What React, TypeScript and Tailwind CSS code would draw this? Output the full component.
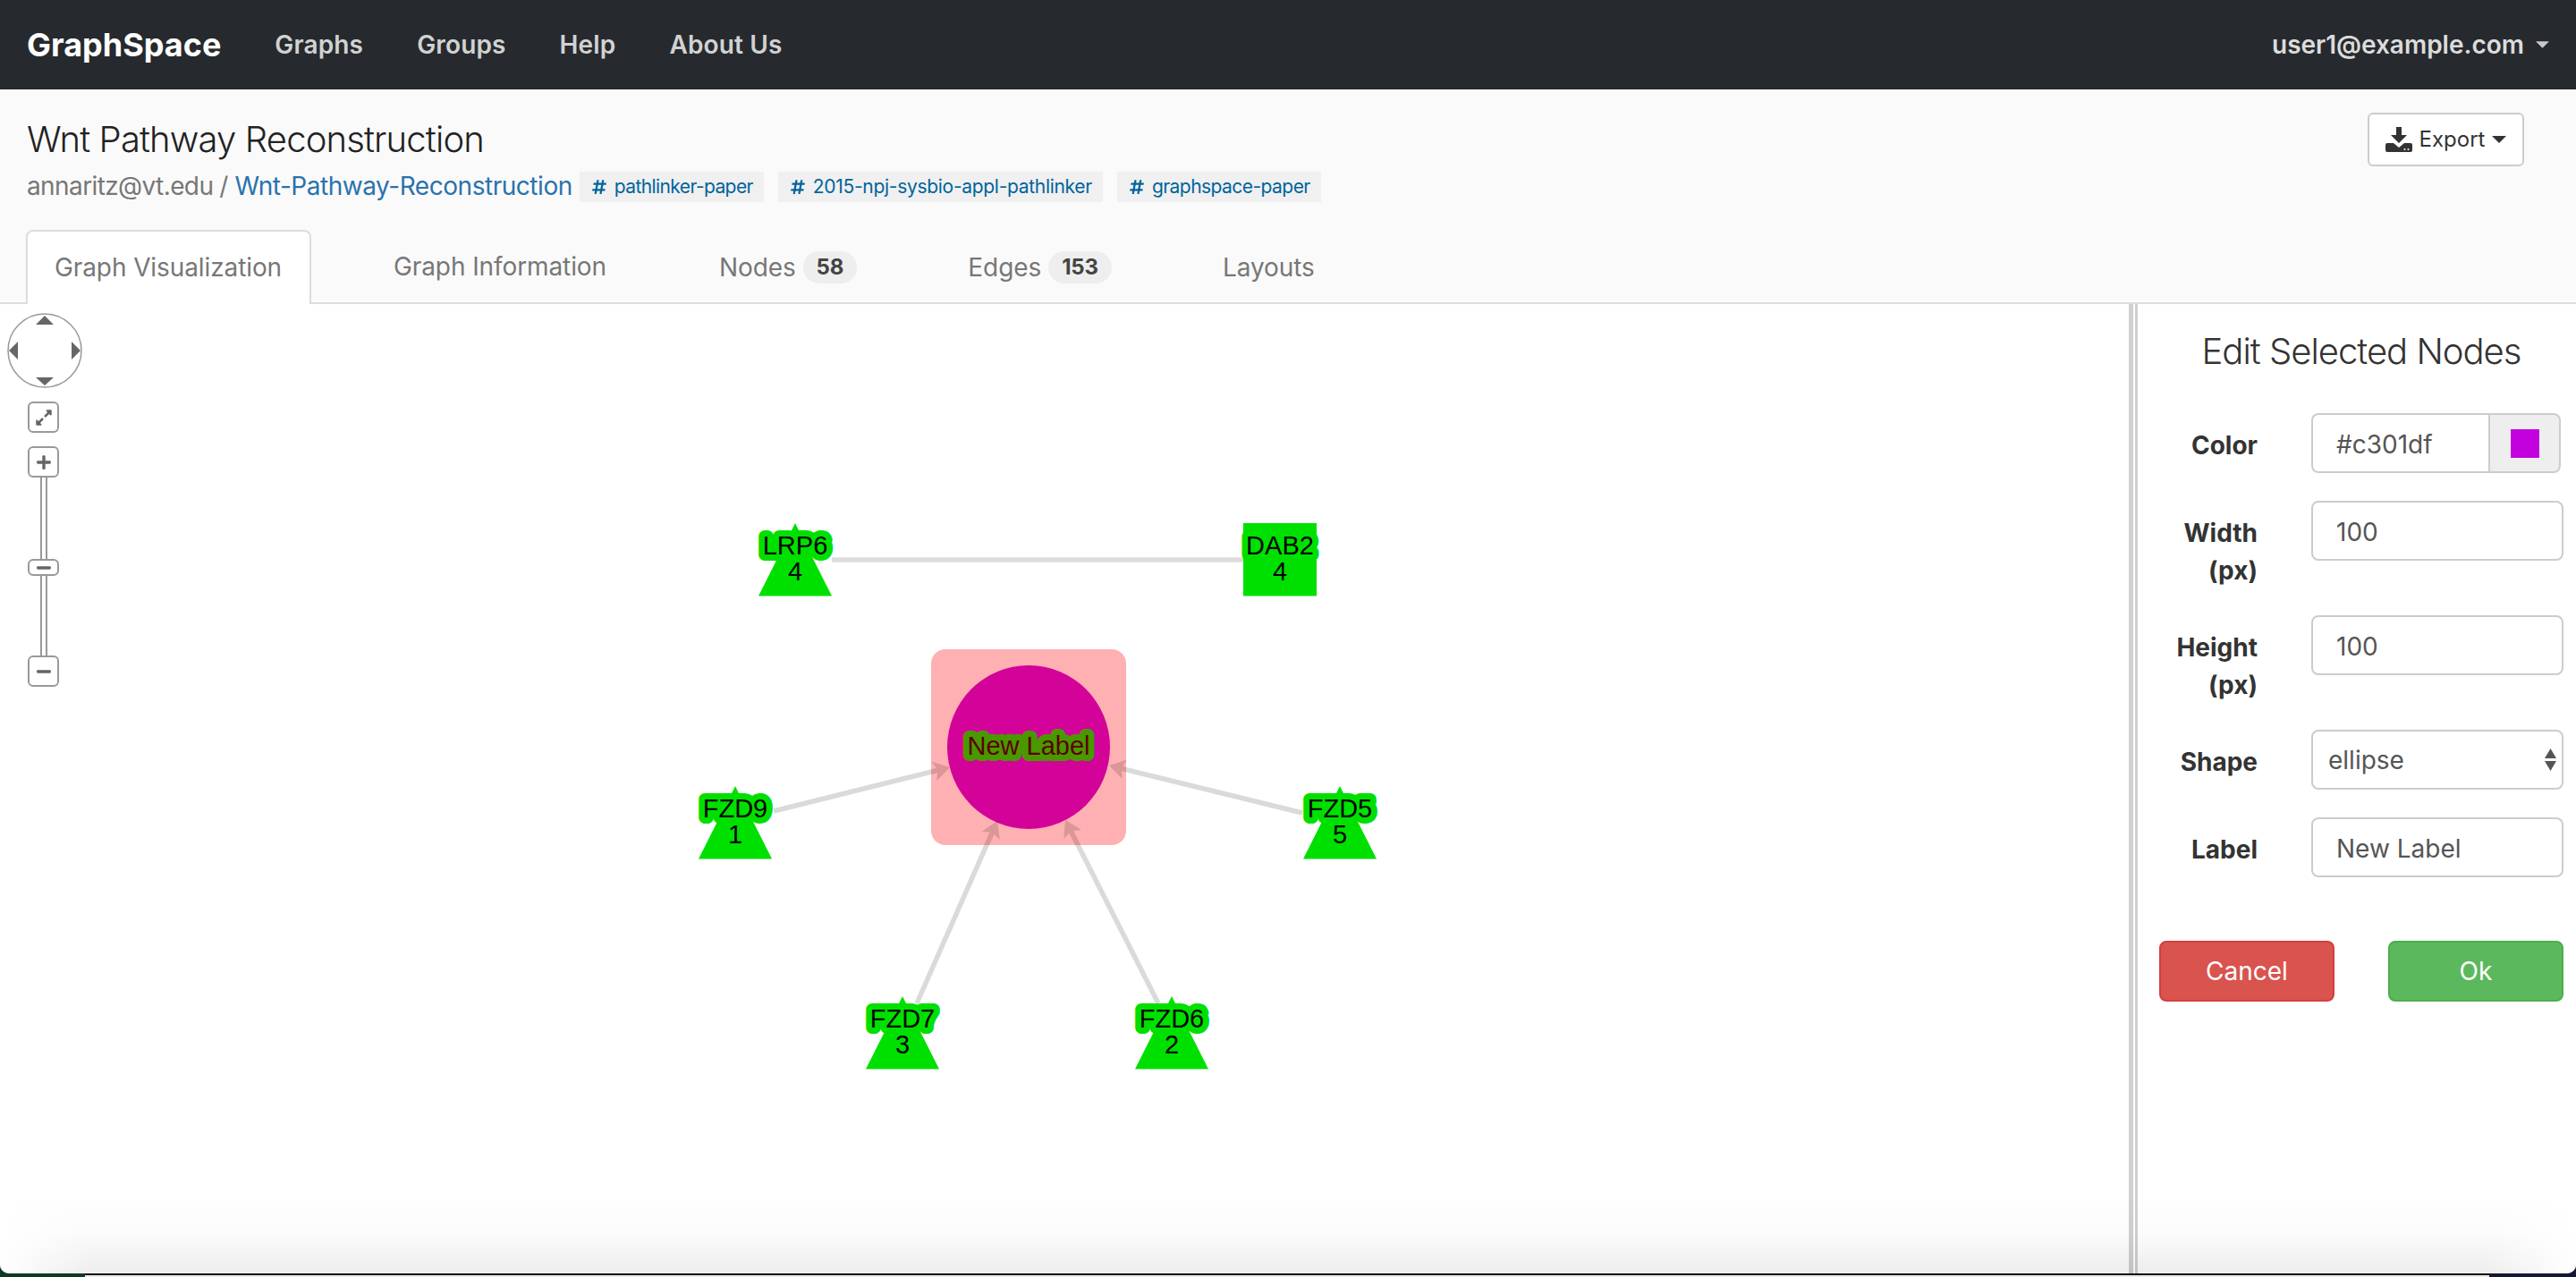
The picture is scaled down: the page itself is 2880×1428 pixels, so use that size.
import React from 'react';
import { FaExpandAlt, FaHashtag, FaMinus, FaPlus } from 'react-icons/fa';

const sans = 'font-["Inter","Liberation_Sans",sans-serif]';

function Caret({ className }: { className: string }) {
  return (
    <svg viewBox="0 0 16 8" className={className} fill="currentColor">
      <path d="M0 0h16L8 8z" />
    </svg>
  );
}

function DownloadIcon() {
  return (
    <svg viewBox="0 0 30 28" className="w-[30px] h-[28px] text-[#333]" fill="currentColor">
      <path d="M12 0h6v9h6l-9 9-9-9h6z" />
      <path d="M2 18h7l6 5 6-5h7a2 2 0 0 1 2 2v6a2 2 0 0 1-2 2H2a2 2 0 0 1-2-2v-6a2 2 0 0 1 2-2z" />
      <circle cx="21.5" cy="25" r="1" fill="#fff" />
      <circle cx="25.5" cy="25" r="1" fill="#fff" />
    </svg>
  );
}

function Tag({ label, tracking }: { label: string; tracking: string }) {
  return (
    <span className={`h-[34px] flex items-center pl-[13px] pr-[12px] gap-[8px] bg-[#f0f0f0] text-[#00649c] text-[21px] ${tracking}`}>
      <FaHashtag className="w-[18px] h-[18px]" />
      {label}
    </span>
  );
}

function Badge({ value }: { value: string }) {
  return (
    <span className="h-[36px] px-[15px] flex items-center rounded-full bg-[#eeeeee] text-[#444] text-[24px] font-bold">
      {value}
    </span>
  );
}

function GraphNode({ x, y, name, rank, square }: { x: number; y: number; name: string; rank: string; square?: boolean }) {
  return (
    <g>
      {square ? (
        <rect x={x - 41} y={y} width="82" height="81.5" fill="#00e000" />
      ) : (
        <polygon points={`${x},${y} ${x + 41},${y + 81.5} ${x - 41},${y + 81.5}`} fill="#00e000" />
      )}
      <text
        x={x}
        y={y + 35}
        textAnchor="middle"
        fontSize="29"
        fill="#000"
        stroke="#00e000"
        strokeWidth="14"
        strokeLinejoin="round"
        paintOrder="stroke"
      >
        {name}
      </text>
      <text x={x} y={y + 64} textAnchor="middle" fontSize="29" fill="#000">
        {rank}
      </text>
    </g>
  );
}

function Edge({ x1, y1, x2, y2 }: { x1: number; y1: number; x2: number; y2: number }) {
  const angle = (Math.atan2(y2 - y1, x2 - x1) * 180) / Math.PI;
  return (
    <g opacity="0.14">
      <line x1={x1} y1={y1} x2={x2 - 10 * Math.cos((angle * Math.PI) / 180)} y2={y2 - 10 * Math.sin((angle * Math.PI) / 180)} stroke="#000" strokeWidth="5.5" />
      <polygon points="0,0 -18,-11 -14,0 -18,11" fill="#000" transform={`translate(${x2} ${y2}) rotate(${angle})`} />
    </g>
  );
}

function GraphCanvas() {
  return (
    <svg viewBox="0 340 2380 1084" className="w-full h-full block font-['Liberation_Sans',sans-serif]">
      <rect x="1041" y="726" width="218" height="219" rx="16" fill="#ffb0b2" />
      <ellipse cx="1150" cy="835.5" rx="91" ry="91.5" fill="#d30399" />
      <line x1="930" y1="626" x2="1390" y2="626" stroke="#dcdcdc" strokeWidth="5.5" />
      <Edge x1={865} y1={907} x2={1062} y2={858} />
      <Edge x1={1456} y1={909} x2={1240} y2={856} />
      <Edge x1={1025} y1={1122} x2={1115} y2={918} />
      <Edge x1={1295} y1={1122} x2={1191} y2={917} />
      <GraphNode x={889} y={585} name="LRP6" rank="4" />
      <GraphNode x={1431} y={585} name="DAB2" rank="4" square />
      <GraphNode x={822} y={879} name="FZD9" rank="1" />
      <GraphNode x={1498} y={879} name="FZD5" rank="5" />
      <GraphNode x={1009} y={1114} name="FZD7" rank="3" />
      <GraphNode x={1310} y={1114} name="FZD6" rank="2" />
      <text
        x="1150"
        y="844"
        textAnchor="middle"
        fontSize="29"
        fill="#5a0000"
        stroke="#4a9800"
        strokeWidth="14"
        strokeLinejoin="round"
        paintOrder="stroke"
      >
        New Label
      </text>
    </svg>
  );
}

function PanZoom() {
  const btn = 'w-[35px] flex items-center justify-center bg-white border-2 border-[#999] rounded-[6px] text-[#666]';
  return (
    <div className="absolute left-[8px] top-[10px] flex flex-col">
      <svg viewBox="0 0 84 84" className="w-[84px] h-[84px]">
        <circle cx="42" cy="42" r="41" fill="#fff" stroke="#999" strokeWidth="1.5" />
        <path d="M42 3l10 10H32zM42 81L32 72h20zM2 42l10-10v20zM82 42L72 32v20z" fill="#666" />
      </svg>
      <div className="ml-[23px] mt-[15px] flex flex-col items-center w-[35px]">
        <div className={`${btn} h-[35px]`}>
          <FaExpandAlt className="w-[20px] h-[20px]" />
        </div>
        <div className={`${btn} h-[35px] mt-[15px]`}>
          <FaPlus className="w-[18px] h-[18px]" />
        </div>
        <div className="w-[8px] h-[91px] border-x-2 border-[#999] bg-white" />
        <div className={`${btn} h-[19px]`}>
          <FaMinus className="w-[18px] h-[18px]" />
        </div>
        <div className="w-[8px] h-[89px] border-x-2 border-[#999] bg-white" />
        <div className={`${btn} h-[35px]`}>
          <FaMinus className="w-[18px] h-[18px]" />
        </div>
      </div>
    </div>
  );
}

function FieldRow({ label, tall, children }: { label: React.ReactNode; tall?: boolean; children: React.ReactNode }) {
  return (
    <div className={`flex ${tall ? 'h-[97px]' : 'h-[67px]'}`}>
      <label className="w-[110px] pt-[15px] text-right font-bold text-[28px] leading-[42px] text-[#333]">{label}</label>
      <div className="ml-[60px] w-[282px]">{children}</div>
    </div>
  );
}

const inputClass =
  'w-full h-[67px] px-[26px] pt-[2px] bg-white border-2 border-[#ccc] rounded-[8px] text-[28px] text-[#555] outline-none';

export default function App() {
  return (
    <div className={`w-[2880px] h-[1428px] flex flex-col overflow-hidden bg-[linear-gradient(90deg,#0c3a22_50%,#141a33_50%)] ${sans}`}>
      <div className="h-[1424px] shrink-0 relative overflow-hidden rounded-b-[10px] bg-white flex flex-col">
        {/* Navbar */}
        <nav className="h-[100px] shrink-0 bg-[#262a2e] flex items-center pl-[30px] pr-[30px]">
          <span className="text-white font-bold text-[36px]">GraphSpace</span>
          <div className="ml-[60px] flex items-center gap-[60px] text-[28px] font-semibold text-[#d2d2d2] tracking-[0.15px]">
            <a>Graphs</a>
            <a>Groups</a>
            <a>Help</a>
            <a>About Us</a>
          </div>
          <div className="ml-auto flex items-center gap-[13px] text-[28px] font-semibold text-[#dcdcdc]">
            user1@example.com
            <Caret className="w-[15px] h-[8px] text-[#c8c8c8]" />
          </div>
        </nav>

        {/* Graph title, tags and tabs */}
        <header className="h-[240px] shrink-0 bg-[#fafafa] border-b-2 border-[#ddd] flex flex-col justify-between">
          <div className="flex items-start justify-between pl-[30px] pr-[58px]">
            <div className="pt-[32px]">
              <h1 className="font-light text-[40px] leading-[48px] text-[#222] tracking-[-0.85px]">Wnt Pathway Reconstruction</h1>
              <div className="mt-[12px] flex items-center h-[34px]">
                <span className="text-[28px] text-[#777] tracking-[-0.6px] pb-[3px]">annaritz@vt.edu</span>
                <span className="text-[28px] text-[#777] ml-[7px] pb-[3px]">/</span>
                <a className="text-[28px] text-[#2a72ad] ml-[7px] tracking-[-0.46px] pb-[3px]">Wnt-Pathway-Reconstruction</a>
                <div className="flex gap-[16px] ml-[8px]">
                  <Tag label="pathlinker-paper" tracking="tracking-[-0.6px]" />
                  <Tag label="2015-npj-sysbio-appl-pathlinker" tracking="tracking-[-0.3px]" />
                  <Tag label="graphspace-paper" tracking="tracking-[-0.55px]" />
                </div>
              </div>
            </div>
            <button className="mt-[26px] h-[60px] w-[175px] flex items-center justify-center gap-[8px] bg-white border-2 border-[#ccc] rounded-[6px] text-[24px] text-[#333]">
              <DownloadIcon />
              Export
              <Caret className="w-[16px] h-[8px]" />
            </button>
          </div>
          <div className="flex pl-[29px] gap-[62px] text-[28px] text-[#777] tracking-[-0.1px] -mb-[2px]">
            <a className="h-[83px] pl-[30px] pr-[31px] pb-[2px] flex items-center bg-white border-2 border-b-0 border-[#ddd] rounded-t-[8px]">
              Graph Visualization
            </a>
            <a className="h-[83px] px-[31px] pb-[2px] ml-[-1px] mr-[2px] flex items-center">Graph Information</a>
            <a className="h-[83px] px-[31px] flex items-center gap-[8px]">
              Nodes <Badge value="58" />
            </a>
            <a className="h-[83px] px-[31px] flex items-center gap-[8px]">
              Edges <Badge value="153" />
            </a>
            <a className="h-[83px] px-[31px] flex items-center">Layouts</a>
          </div>
        </header>

        <main className="flex-1 flex min-h-0">
          <div className="w-[2380px] relative">
            <GraphCanvas />
            <PanZoom />
          </div>

          {/* Splitter */}
          <div className="w-[10px] flex justify-between bg-white">
            <div className="w-[5px] bg-[#d0d0d0]" />
            <div className="w-[3px] bg-[#d0d0d0]" />
          </div>

          {/* Edit panel */}
          <aside className="flex-1 pt-[29px] pl-[24px] pr-[14px] text-[#333]">
            <h2 className="font-light text-[40px] leading-[48px] text-center tracking-[-1px]">Edit Selected Nodes</h2>
            <form className="mt-[45px] flex flex-col gap-[31px]">
              <FieldRow label="Color">
                <div className="flex w-[279px] h-[67px]">
                  <input
                    readOnly
                    defaultValue="#c301df"
                    className="w-[198px] h-full px-[26px] pt-[2px] bg-white border-2 border-r-0 border-[#ccc] rounded-l-[8px] text-[28px] text-[#555] outline-none"
                  />
                  <span className="flex-1 flex items-center justify-center bg-[#eeeeee] border-2 border-[#ccc] rounded-r-[8px]">
                    <span className="w-[32px] h-[32px] bg-[#c301df]" />
                  </span>
                </div>
              </FieldRow>
              <FieldRow
                tall
                label={
                  <>
                    Width
                    <br />
                    (px)
                  </>
                }
              >
                <input readOnly defaultValue="100" className={inputClass} />
              </FieldRow>
              <FieldRow
                tall
                label={
                  <>
                    Height
                    <br />
                    (px)
                  </>
                }
              >
                <input readOnly defaultValue="100" className={inputClass} />
              </FieldRow>
              <FieldRow label="Shape">
                <div className="relative">
                  <select defaultValue="ellipse" className={`${inputClass} appearance-none !px-[17px] !pt-0`}>
                    <option value="ellipse">ellipse</option>
                  </select>
                  <svg viewBox="0 0 17 25" className="absolute right-[6px] top-[21px] w-[17px] h-[25px] text-[#555]" fill="currentColor">
                    <path d="M8.5 0L15 11H2zM8.5 25L2 14h13z" />
                  </svg>
                </div>
              </FieldRow>
              <FieldRow label="Label">
                <input readOnly defaultValue="New Label" className={inputClass} />
              </FieldRow>
            </form>
            <div className="mt-[71px] flex justify-between">
              <button className="w-[196px] h-[68px] bg-[#d9534f] border-2 border-[#d43f3a] rounded-[8px] text-white text-[28px]">Cancel</button>
              <button className="w-[196px] h-[68px] bg-[#5cb85c] border-2 border-[#4cae4c] rounded-[8px] text-white text-[28px]">Ok</button>
            </div>
          </aside>
        </main>

        {/* Window edge shading */}
        <div className="absolute inset-x-0 bottom-0 h-[90px] pointer-events-none bg-linear-to-b from-transparent via-[rgba(0,0,0,0.015)] via-50% to-[rgba(0,0,0,0.07)]" />
        <div className="absolute left-0 bottom-0 w-[100px] h-[90px] pointer-events-none bg-linear-to-r from-white to-transparent" />
        <div className="absolute right-0 bottom-0 w-[100px] h-[90px] pointer-events-none bg-linear-to-l from-white to-transparent" />
      </div>

      {/* Sliver of the desktop under the window */}
      <div className="h-[4px] flex">
        <div className="w-[95px]" />
        <div className="flex-1 flex flex-col">
          <div className="h-[2px] bg-[#0a0d14]" />
          <div className="h-[2px] bg-[#ececec]" />
        </div>
        <div className="w-[97px]" />
      </div>
    </div>
  );
}
